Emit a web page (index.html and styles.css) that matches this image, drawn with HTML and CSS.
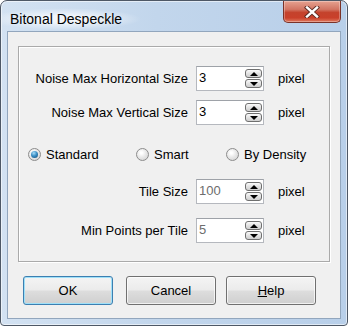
FILE: index.html
```html
<!DOCTYPE html>
<html lang="en">

<head>
    <meta charset="utf-8">
    <title>Bitonal Despeckle</title>
    <link rel="stylesheet" href="styles.css">
</head>

<body>
    <div class="window">
        <div class="titlebar">
            <span class="title">Bitonal Despeckle</span>
            <button class="close" aria-label="Close">
                <svg width="16" height="12" viewBox="0 0 16 12">
                    <path d="M3 1.5 L13 10.5 M13 1.5 L3 10.5" stroke="#5a2a22" stroke-width="4.2" stroke-linecap="square" />
                    <path d="M3 1.5 L13 10.5 M13 1.5 L3 10.5" stroke="#fff" stroke-width="2.4" stroke-linecap="square" />
                </svg>
            </button>
        </div>

        <div class="client">
            <div class="group">
                <div class="row">
                    <span class="label">Noise Max Horizontal Size</span>
                    <div class="spin">
                        <span class="value">3</span>
                        <div class="arrows">
                            <span class="arrow up"></span>
                            <span class="arrow down"></span>
                        </div>
                    </div>
                    <span class="unit">pixel</span>
                </div>

                <div class="row second">
                    <span class="label">Noise Max Vertical Size</span>
                    <div class="spin">
                        <span class="value">3</span>
                        <div class="arrows">
                            <span class="arrow up"></span>
                            <span class="arrow down"></span>
                        </div>
                    </div>
                    <span class="unit">pixel</span>
                </div>

                <div class="radios">
                    <label class="radio first"><span class="dot checked"></span>Standard</label>
                    <label class="radio mid"><span class="dot"></span>Smart</label>
                    <label class="radio"><span class="dot"></span>By Density</label>
                </div>

                <div class="row tile">
                    <span class="label">Tile Size</span>
                    <div class="spin">
                        <span class="value grey">100</span>
                        <div class="arrows">
                            <span class="arrow up"></span>
                            <span class="arrow down"></span>
                        </div>
                    </div>
                    <span class="unit">pixel</span>
                </div>

                <div class="row last">
                    <span class="label">Min Points per Tile</span>
                    <div class="spin">
                        <span class="value grey">5</span>
                        <div class="arrows">
                            <span class="arrow up"></span>
                            <span class="arrow down"></span>
                        </div>
                    </div>
                    <span class="unit">pixel</span>
                </div>
            </div>

            <div class="buttons">
                <button class="btn default">OK</button>
                <button class="btn cancel">Cancel</button>
                <button class="btn help"><u>H</u>elp</button>
            </div>
        </div>
    </div>
</body>

</html>
```

FILE: styles.css
```css
body {
    margin: 0;
    font-family: "Liberation Sans", Arial, sans-serif;
    font-size: 13px;
    color: #000;
}

.window {
    width: 348px;
    height: 326px;
    box-sizing: border-box;
    border: 1px solid #4e5866;
    border-radius: 7px 7px 4px 4px;
    background: linear-gradient(to right, #d3e2f2 0%, #c2d6ec 45%, #b8cfe9 100%);
    box-shadow: inset 0 0 0 1px rgba(255, 255, 255, 0.55);
    display: flex;
    flex-direction: column;
}

.titlebar {
    height: 30px;
    display: flex;
    justify-content: space-between;
    align-items: flex-start;
}

.title {
    font-size: 14px;
    line-height: 16px;
    margin: 7px 0 0 0;
    padding: 3px 20px 3px 9px;
    background: radial-gradient(ellipse at 45% 50%, rgba(255, 255, 255, 0.75) 20%, rgba(255, 255, 255, 0) 70%);
}

.close {
    width: 58px;
    height: 22px;
    margin: 0 6px 0 0;
    padding: 0;
    border: 1px solid #7a3228;
    border-top: none;
    border-radius: 0 0 5px 5px;
    background: linear-gradient(to bottom, #e6a291 0%, #d27563 40%, #c4422c 55%, #c9402a 80%, #e07a5f 100%);
    box-shadow: inset 0 0 0 1px rgba(255, 255, 255, 0.3);
    display: flex;
    align-items: center;
    justify-content: center;
}

.client {
    flex: 1;
    margin: 0 6px 6px 6px;
    border: 1px solid #92a6bd;
    background: #f0f0f0;
    display: flex;
    flex-direction: column;
}

.group {
    margin: 14px 10px 0 10px;
    border: 1px solid #aaaaaa;
    box-shadow: inset 1px 1px 0 #fff, 1px 1px 0 #fff;
    padding: 19px 0 18px 0;
}

.row {
    display: flex;
    align-items: center;
    height: 25px;
}

.row.second {
    margin-top: 9px;
}

.row.tile {
    margin-top: 18px;
}

.row.last {
    margin-top: 14px;
}

.label {
    width: 169px;
    text-align: right;
}

.spin {
    width: 68px;
    height: 25px;
    box-sizing: border-box;
    margin-left: 8px;
    border: 1px solid #b5b8be;
    border-top-color: #9ea2a8;
    background: #fff;
    display: flex;
    align-items: center;
    padding: 0 1px 0 2px;
}

.value {
    flex: 1;
    align-self: flex-start;
    padding-top: 3px;
    line-height: 15px;
}

.value.grey {
    color: #6d6d6d;
}

.arrows {
    display: flex;
    flex-direction: column;
    gap: 1px;
}

.arrow {
    width: 17px;
    height: 9px;
    box-sizing: border-box;
    border: 1px solid #6f6f6f;
    border-radius: 3px;
    background: linear-gradient(to bottom, #fbfbfb, #e2e2e2 50%, #cfcfcf);
    display: flex;
    align-items: center;
    justify-content: center;
}

.arrow::after {
    content: "";
    border-left: 4px solid transparent;
    border-right: 4px solid transparent;
}

.arrow.up::after {
    border-bottom: 4px solid #000;
}

.arrow.down::after {
    border-top: 4px solid #000;
}

.unit {
    margin-left: 14px;
}

.radios {
    display: flex;
    align-items: center;
    height: 13px;
    margin-top: 23px;
    padding-left: 9px;
}

.radio {
    display: flex;
    align-items: center;
    line-height: 13px;
}

.radio.first {
    width: 108px;
}

.radio.mid {
    width: 90px;
}

.dot {
    width: 13px;
    height: 13px;
    box-sizing: border-box;
    border: 1px solid #8c8c8c;
    border-radius: 50%;
    background: radial-gradient(circle at 40% 35%, #ffffff 10%, #e6e6e6 50%, #cfcfcf 100%);
    margin-right: 5px;
    display: flex;
    align-items: center;
    justify-content: center;
}

.dot.checked::after {
    content: "";
    width: 7px;
    height: 7px;
    border-radius: 50%;
    background: radial-gradient(circle at 40% 30%, #a9ddf7 0%, #3a8fc6 45%, #10456f 100%);
}

.buttons {
    display: flex;
    margin: 14px 0 0 15px;
}

.btn {
    width: 90px;
    height: 29px;
    box-sizing: border-box;
    border: 1px solid #707070;
    border-radius: 3px;
    background: linear-gradient(to bottom, #f4f4f4 0%, #ebebeb 48%, #dddddd 52%, #cfcfcf 100%);
    box-shadow: inset 0 0 0 1px rgba(255, 255, 255, 0.7);
    font-family: "Liberation Sans", Arial, sans-serif;
    font-size: 13px;
    color: #000;
    padding: 0;
}

.btn.default {
    border-color: #3c7fb1;
    box-shadow: inset 0 0 0 1px #9fe0f8;
}

.btn.cancel {
    margin-left: 13px;
}

.btn.help {
    margin-left: 10px;
}
```
